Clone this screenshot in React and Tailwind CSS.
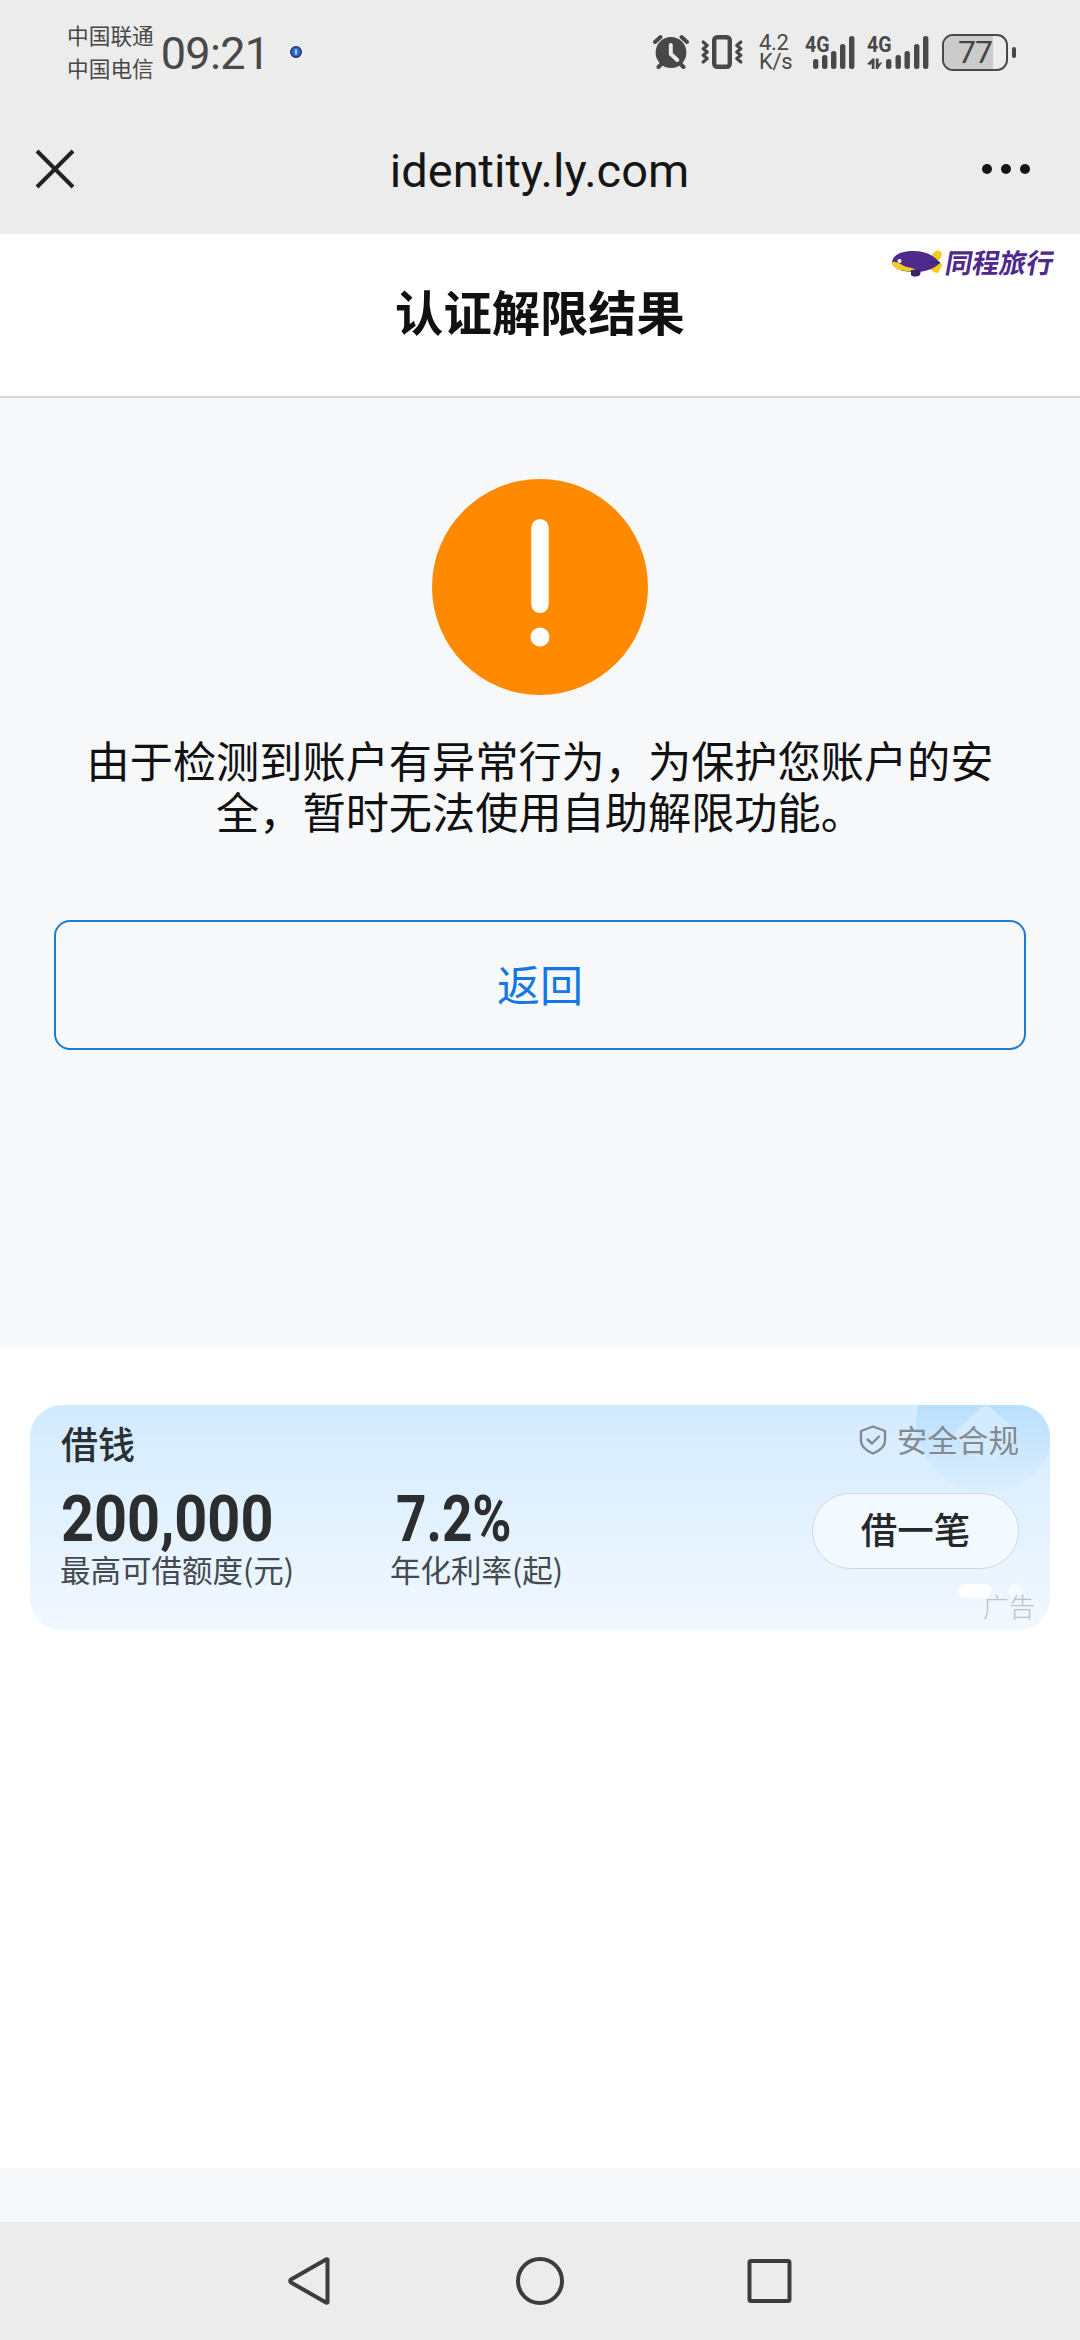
const firstSim = [
  { x: 8, h: 10 },
  { x: 17, h: 14 },
  { x: 26, h: 18 },
  { x: 35, h: 25 },
  { x: 44, h: 33 },
];

const secondSim = [
  { x: 19, h: 10 },
  { x: 28.5, h: 14 },
  { x: 37.5, h: 18 },
  { x: 47, h: 25 },
  { x: 56, h: 33 },
];

function AlarmIcon() {
  return (
    <svg className="h-[36px] w-[36px]" viewBox="0 0 36 36" fill="none" strokeLinecap="round">
      <circle cx="18" cy="18.5" r="15.4" fill="#484848" />
      <path d="M2 8 7.5 3M34 8 28.5 3M8.5 30 5.5 33M27.5 30 30.5 33" stroke="#484848" strokeWidth="4" />
      <path d="M17.8 11v9l6.5 6" stroke="#ececec" strokeWidth="4" strokeLinejoin="round" />
    </svg>
  );
}

function VibrateIcon() {
  return (
    <svg className="h-[34px] w-[42px]" viewBox="0 0 42 34" fill="none" stroke="#484848" strokeLinejoin="round" strokeLinecap="round">
      <rect x="13.2" y="2.2" width="15.6" height="29.6" rx="3" strokeWidth="4.4" />
      <path d="M2.2 7l4 3.5-4 3.2 4 3.3-4 3.2 4 3.3-4 3.5M39.8 7l-4 3.5 4 3.2-4 3.3 4 3.2-4 3.3 4 3.5" strokeWidth="3.2" />
    </svg>
  );
}

function Signal({ bars, arrows }) {
  return (
    <svg className={arrows ? 'h-[34px] w-[62px] overflow-visible' : 'h-[34px] w-[50px] overflow-visible'} viewBox={arrows ? '0 0 62 34' : '0 0 50 34'} fill="#484848">
      <text x="0" y="16.5" className="font-['Roboto'] text-[22px] font-bold" textLength="24.5" lengthAdjust="spacingAndGlyphs">
        4G
      </text>
      {bars.map((bar) => (
        <rect key={bar.x} x={bar.x} y={34 - bar.h} width="5.4" height={bar.h} rx="2.5" />
      ))}
      {arrows && <path d="M0 29 5.5 23.5H7.5V34H4.7V28.5L3 30zM8.8 23.5h2.8v5.5l1.8-1.4h1.8L10.8 34h-2z" />}
    </svg>
  );
}

function Battery() {
  return (
    <div className="flex items-center gap-[4px]">
      <div className="relative h-[37px] w-[66px] overflow-hidden rounded-[11px] border-[2.5px] border-[#484848]">
        <div className="h-full w-[49px] bg-[#cbcbcb]" />
        <span className="absolute inset-0 flex items-center justify-center font-['Roboto'] text-[32px] leading-none tracking-[-1px] text-[#444444]">77</span>
      </div>
      <div className="h-[11px] w-[4px] rounded-[2px] bg-[#484848]" />
    </div>
  );
}

function StatusBar() {
  return (
    <div className="flex h-[104px] items-center justify-between pr-[64px] pl-[67px] text-[#484848]">
      <div className="flex items-center">
        <div className="-mt-[3px] text-[21.7px] leading-[33px]">
          <div>中国联通</div>
          <div>中国电信</div>
        </div>
        <span className="ml-[7px] w-[104px] pt-[2px] font-['Roboto'] text-[45px] leading-none tracking-[-0.7px]">09:21</span>
        <svg className="ml-[25px] h-[12px] w-[12px]" viewBox="0 0 12 12">
          <circle cx="6" cy="6" r="5.3" fill="#2d68d8" stroke="#12285c" strokeWidth="1.2" />
          <path d="M6 3v6M4.8 5.5h2.4" stroke="#dceaff" strokeWidth="1.2" />
        </svg>
      </div>
      <div className="flex items-center">
        <AlarmIcon />
        <div className="ml-[12px] flex">
          <VibrateIcon />
        </div>
        <div className="ml-[16px] w-[33px] font-['Roboto'] text-[22px] leading-[19px] tracking-[-0.3px]">
          <div>4.2</div>
          <div>K/s</div>
        </div>
        <div className="ml-[13px] flex gap-[12px]">
          <Signal bars={firstSim} />
          <Signal bars={secondSim} arrows />
        </div>
        <div className="ml-[13px]">
          <Battery />
        </div>
      </div>
    </div>
  );
}

function TitleBar() {
  return (
    <div className="flex h-[130px] items-center justify-between pr-[50px] pl-[35px]">
      <svg className="h-[40px] w-[40px]" viewBox="0 0 40 40" fill="none" stroke="#222222" strokeWidth="4">
        <path d="M2 2 38 38M38 2 2 38" />
      </svg>
      <div className="pt-[2px] pl-[22px] font-['Roboto'] text-[47px] leading-none text-[#151515]">identity.ly.com</div>
      <div className="flex gap-[9px]">
        <i className="size-[10px] rounded-full bg-[#151515]" />
        <i className="size-[10px] rounded-full bg-[#151515]" />
        <i className="size-[10px] rounded-full bg-[#151515]" />
      </div>
    </div>
  );
}

function TravelLogo() {
  return (
    <div className="flex items-center">
      <svg className="h-[27px] w-[51px]" viewBox="0 0 51 27">
        <path d="M39 9C40 3 44-1 48 1c3 2 2 6-1 9l-2 3h4c2 1 1 4-1 6l-2 4c-4 0-8-3-9-6z" fill="#f2cf1d" />
        <path d="M0 12C1 4 11 1 21 1c12 0 21 4 27 12-6 6-15 9-25 9C9 22 0 18 0 12z" fill="#4f2a8c" />
        <path d="M0 12c5-1 8 2 12 4 5 2 9 1 12 5C10 22 0 19 0 12z" fill="#f2cf1d" />
        <path d="M19 20h10l-1 5c-3 2-7 2-9 0z" fill="#3c2069" />
        <path d="M38 12.500h10" stroke="#3c2069" strokeWidth="1.500" />
        <circle cx="7.500" cy="11" r="2" fill="#fff" />
      </svg>
      <span className="ml-[3px] -mt-[3px] -skew-x-[10deg] text-[27px] leading-none font-bold text-[#4f2a8c]">同程旅行</span>
    </div>
  );
}

function LoanCard() {
  return (
    <div className="relative mx-[30px] h-[225px] overflow-hidden rounded-[32px] bg-linear-to-b from-[#d3ebfe] to-[#f2f8ff]">
      <svg className="absolute top-0 right-0 h-[100px] w-[150px]" viewBox="0 0 150 100">
        <defs>
          <linearGradient id="blob" x1="0" y1="0" x2="0" y2="1">
            <stop offset="0.35" stopColor="#b8dfff" />
            <stop offset="1" stopColor="#dceffe" />
          </linearGradient>
        </defs>
        <circle cx="86" cy="17" r="70" fill="url(#blob)" />
        <path d="M81 3q5-4 10 0l25 22q5 4 0 9L90 57q-4 3-8 0L57 34q-5-5 0-9z" fill="#d3ebfe" />
      </svg>

      <div className="relative flex justify-between pr-[31px] pl-[31px]">
        <div className="flex flex-col">
          <div className="mt-[18px] text-[37px] leading-[40px] font-medium text-[#2b3033]">借钱</div>
          <div className="mt-[29px] flex">
            <div className="w-[329px]">
              <div className="origin-left scale-x-90 font-['Roboto'] text-[64px] leading-[56px] font-bold text-[#2b2d2e]">200,000</div>
              <div className="mt-[3px] -ml-px text-[30.500px] leading-[36px] whitespace-nowrap text-[#43494e]">最高可借额度(元)</div>
            </div>
            <div>
              <div className="ml-[6px] origin-left scale-x-[0.83] font-['Roboto'] text-[64px] leading-[56px] font-bold text-[#2b2d2e]">7.2%</div>
              <div className="mt-[3px] text-[30.500px] leading-[36px] whitespace-nowrap text-[#43494e]">年化利率(起)</div>
            </div>
          </div>
        </div>

        <div className="flex flex-col items-end">
          <div className="mt-[16px] flex items-center gap-[10px] text-[#83898f]">
            <svg className="mt-[2px] h-[30px] w-[28px]" viewBox="0 0 28 30" fill="none" stroke="#83898f" strokeWidth="2.400" strokeLinejoin="round" strokeLinecap="round">
              <path d="M14 1.500 26 6v10c0 6-5 9.500-12 12.500C7 25.500 2 22 2 16V6z" />
              <path d="m8.500 14.500 4.500 4 7-7" />
            </svg>
            <span className="text-[30.600px] leading-[36px]">安全合规</span>
          </div>
          <div className="mt-[36px] flex h-[76px] w-[207px] items-center justify-center rounded-full border-[1.500px] border-[#d3d7db] bg-[#f2f9ff] pb-[3px] text-[36.500px] font-medium text-[#25292c]">借一笔</div>
        </div>
      </div>

      <div className="absolute right-[59px] bottom-[32px] h-[14px] w-[33px] rounded-full bg-white" />
      <div className="absolute right-[28px] bottom-[32px] h-[14px] w-[14px] rounded-full bg-[#f8fcff]" />
      <div className="absolute right-[15px] bottom-[10px] text-[26px] leading-[28px] font-light text-[#bfc2c6]">广告</div>
    </div>
  );
}

function SystemNav() {
  return (
    <div className="flex h-[118px] items-center justify-center gap-[180px] bg-[#ececec]">
      <svg className="h-[50px] w-[50px]" viewBox="0 0 50 50" fill="none" stroke="#3c3c3c" strokeWidth="4" strokeLinejoin="round">
        <path d="M42.500 3.500v43a1 1 0 0 1-1.500 0L6 26.500a1.800 1.800 0 0 1 0-3L41 3.500a1 1 0 0 1 1.500 0z" />
      </svg>
      <svg className="h-[50px] w-[50px]" viewBox="0 0 50 50" fill="none" stroke="#3c3c3c" strokeWidth="4">
        <circle cx="25" cy="25" r="22" />
      </svg>
      <svg className="h-[50px] w-[50px]" viewBox="0 0 50 50" fill="none" stroke="#3c3c3c" strokeWidth="4">
        <rect x="4.500" y="5" width="40" height="40" rx="1.500" />
      </svg>
    </div>
  );
}

export default function App() {
  return (
    <div className="flex h-[2340px] w-[1080px] flex-col overflow-hidden bg-[#f7f8fa] font-['Noto_Sans_CJK_SC',sans-serif]">
      <div className="h-[234px] bg-[#ececec]">
        <StatusBar />
        <TitleBar />
      </div>

      <header className="flex h-[164px] flex-col border-b-2 border-[#d5d5d5] bg-white">
        <div className="flex h-[43px] justify-end pt-[15px] pr-[26px]">
          <TravelLogo />
        </div>
        <h1 className="text-center text-[48.300px] leading-[66px] font-bold text-[#111111]">认证解限结果</h1>
      </header>

      <main className="flex h-[950px] flex-col items-center bg-[#f7f8fa] px-[54px] pt-[81px]">
        <svg className="h-[216px] w-[216px]" viewBox="0 0 216 216">
          <circle cx="108" cy="108" r="108" fill="#ff8a00" />
          <rect x="99.300" y="40" width="17.400" height="94" rx="8.700" fill="#fff" />
          <circle cx="108" cy="158" r="9.500" fill="#fff" />
        </svg>
        <p className="mt-[39px] w-[924px] text-center text-[43.200px] leading-[51px] text-[#111111]">
          由于检测到账户有异常行为，为保护您账户的安
          <br />
          全，暂时无法使用自助解限功能。
        </p>
        <button className="mt-[84px] h-[130px] w-full rounded-[16px] border-2 border-[#1b7cd0] pb-[4px] text-[43px] text-[#1377e6]">返回</button>
      </main>

      <section className="h-[820px] bg-white pt-[57px]">
        <LoanCard />
      </section>

      <div className="h-[54px] bg-[#f7f8fa]" />
      <SystemNav />
    </div>
  );
}
